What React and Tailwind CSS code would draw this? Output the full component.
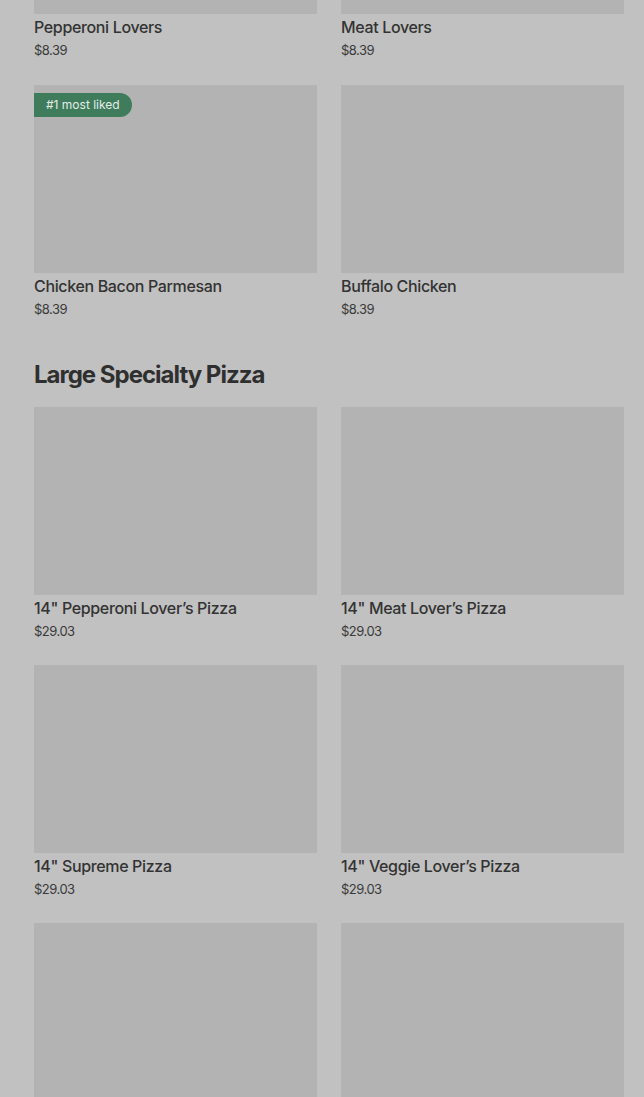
import React from "react";

const font = { fontFamily: "Inter, 'Liberation Sans', sans-serif" };

function Card({ name, price, badge, imgClass = "h-[188px]" }) {
  return (
    <div className="flex flex-col">
      <div className={`relative w-full bg-[#b3b3b3] ${imgClass}`}>
        {badge && (
          <span className="absolute left-0 top-[8px] flex h-[24px] items-center rounded-r-full bg-[#3f7c5c] pl-[12px] pr-[12px] text-[12px] text-[#e4ece8]">
            {badge}
          </span>
        )}
      </div>
      {name && (
        <>
          <div className="mt-[1px] text-[16px] leading-[24px] font-medium text-[#333333] tracking-[-0.35px]">
            {name}
          </div>
          <div className="text-[13px] leading-[22px] text-[#3a3a3a] tracking-[-0.5px]">{price}</div>
        </>
      )}
    </div>
  );
}

export default function App() {
  return (
    <div className="h-[1097px] w-full overflow-hidden bg-[#c1c1c1]" style={font}>
      <div className="pl-[34px] pr-[20px]">
        <div className="grid grid-cols-2 gap-x-[24px] gap-y-[24px]">
          <Card name="Pepperoni Lovers" price="$8.39" imgClass="h-[14px]" />
          <Card name="Meat Lovers" price="$8.39" imgClass="h-[14px]" />
          <Card name="Chicken Bacon Parmesan" price="$8.39" badge="#1 most liked" />
          <Card name="Buffalo Chicken" price="$8.39" />
        </div>
        <h2 className="mt-[39px] mb-[16px] text-[24px] leading-[32px] font-bold tracking-[-1px] text-[#2f2f2f]">
          Large Specialty Pizza
        </h2>
        <div className="grid grid-cols-2 gap-x-[24px] gap-y-[23px]">
          <Card name={'14" Pepperoni Lover\u2019s Pizza'} price="$29.03" />
          <Card name={'14" Meat Lover\u2019s Pizza'} price="$29.03" />
          <Card name={'14" Supreme Pizza'} price="$29.03" />
          <Card name={'14" Veggie Lover\u2019s Pizza'} price="$29.03" />
          <Card />
          <Card />
        </div>
      </div>
    </div>
  );
}
